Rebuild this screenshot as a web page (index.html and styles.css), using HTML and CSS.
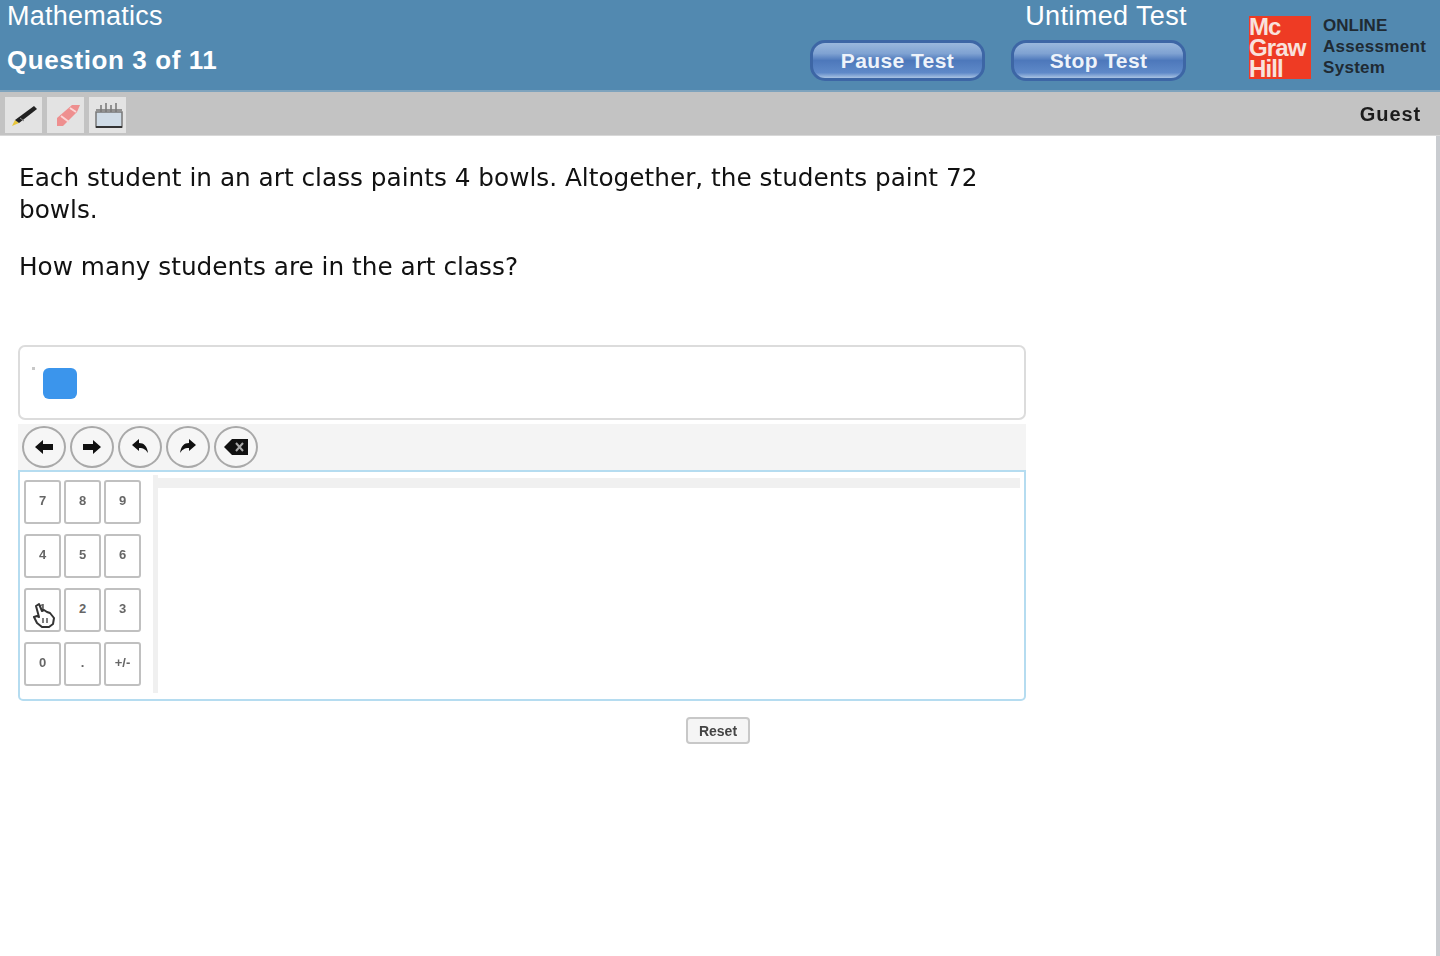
FILE: index.html
```html
<!DOCTYPE html>
<html lang="en">
<head>
<meta charset="utf-8">
<title>Online Assessment</title>
<link rel="stylesheet" href="styles.css">
</head>
<body>
<div class="page">
  <header class="header">
    <div class="titles">
      <div class="subject">Mathematics</div>
      <div class="progress">Question 3 of 11</div>
    </div>
    <div class="controls">
      <div class="timer">Untimed Test</div>
      <div class="buttons">
        <button class="pill">Pause Test</button>
        <button class="pill">Stop Test</button>
      </div>
    </div>
    <div class="brand">
      <div class="logo"><span>Mc</span><span>Graw</span><span>Hill</span></div>
      <div class="brand-text"><span class="online">ONLINE</span><span>Assessment</span><span>System</span></div>
    </div>
  </header>
  <div class="toolbar">
    <div class="tools">
      <div class="tool"><svg width="36" height="36" viewBox="0 0 36 36"><path d="M6 29l3-6 4 3z" fill="#e8c63a"/><path d="M9 23L28 9l3 3-18 14z" fill="#222"/><path d="M14 21l4 3" stroke="#888" stroke-width="1"/></svg></div>
      <div class="tool"><svg width="36" height="36" viewBox="0 0 36 36"><path d="M9 21L24 8h8l-3 7-14 14H9z" fill="#ee8f8f"/><path d="M13 19l8 6M22 11l6 4" stroke="#fbd5d5" stroke-width="2"/></svg></div>
      <div class="tool"><svg width="36" height="36" viewBox="0 0 36 36"><rect x="6" y="15" width="26" height="15" fill="#cfdbe6" stroke="#777" stroke-width="1.5"/><path d="M6 13h26M11 8v7M16 6v9M21 8v7M26 6v9" stroke="#777" stroke-width="1.5"/><path d="M6 30h26" stroke="#333" stroke-width="2"/></svg></div>
    </div>
    <div class="guest">Guest</div>
  </div>
  <main class="content">
    <p class="stem">Each student in an art class paints 4 bowls. Altogether, the students paint 72<br>bowls.</p>
    <p class="ask">How many students are in the art class?</p>
    <div class="answer"><span class="slot"></span></div>
    <div class="editbar">
      <div class="round"><svg width="22" height="22" viewBox="0 0 22 22"><path d="M2 11l8-7v4h10v6H10v4z" fill="#111"/></svg></div>
      <div class="round"><svg width="22" height="22" viewBox="0 0 22 22"><path d="M20 11l-8-7v4H2v6h10v4z" fill="#111"/></svg></div>
      <div class="round"><svg width="22" height="22" viewBox="0 0 22 22"><path d="M3 9l7-6v4c5 0 8 3 9 10-2-3-4-5-9-5v3z" fill="#111"/></svg></div>
      <div class="round"><svg width="22" height="22" viewBox="0 0 22 22"><path d="M19 9l-7-6v4C7 7 4 10 3 17c2-3 4-5 9-5v3z" fill="#111"/></svg></div>
      <div class="round"><svg width="26" height="22" viewBox="0 0 26 22"><path d="M1 11l8-8h16v16H9z" fill="#111"/><path d="M13 7l7 8M20 7l-7 8" stroke="#aaa" stroke-width="2"/></svg></div>
    </div>
    <div class="workspace">
      <div class="keypad">
        <button class="key">7</button><button class="key">8</button><button class="key">9</button>
        <button class="key">4</button><button class="key">5</button><button class="key">6</button>
        <button class="key">1<svg class="hand" width="26" height="28" viewBox="0 0 26 28"><path d="M8 3l3 7 2-1 3 2 3 1 4 5-1 6-4 3h-7l-5-4-3-6 3-1 2 1-3-11z" fill="#fff" stroke="#333" stroke-width="2" stroke-linejoin="round"/><path d="M12 17v5M16 17v5" stroke="#555" stroke-width="1.5"/></svg></button><button class="key">2</button><button class="key">3</button>
        <button class="key">0</button><button class="key">.</button><button class="key">+/-</button>
      </div>
      <div class="canvas"><div class="canvas-head"></div></div>
    </div>
    <div class="reset-row"><button class="reset">Reset</button></div>
  </main>
</div>
</body>
</html>
```
FILE: styles.css
```css
* { box-sizing: border-box; }
html, body { margin: 0; height: 100%; background: #fff; }
body { font-family: "Liberation Sans", Arial, sans-serif; color: #1d1d1d; overflow: hidden; }
button { font-family: inherit; padding: 0; cursor: pointer; }
.page { width: 1440px; height: 956px; display: flex; flex-direction: column; border-right: 4px solid #c9ccd0; filter: blur(0.7px); }

.header { height: 92px; width: 1440px; background: #5289b0; border-bottom: 2px solid #7ea3bd; display: flex; flex: none; color: #fff; }
.titles { width: 787px; padding: 0 0 0 7px; }
.subject { font-size: 27px; line-height: 32px; letter-spacing: .25px; }
.progress { font-size: 26px; line-height: 32px; font-weight: 700; margin-top: 12px; letter-spacing: .6px; }
.controls { width: 399px; display: flex; flex-direction: column; align-items: flex-end; }
.timer { font-size: 27px; line-height: 32px; letter-spacing: .4px; margin-right: -1px; }
.buttons { display: flex; gap: 26px; margin-top: 8px; }
.pill { width: 175px; height: 41px; border-radius: 15px; border: 3px solid #3d66a5; color: #eef3fa; font-size: 21px; font-weight: 700; letter-spacing: .4px; background: linear-gradient(#9ab8dd 0, #7fa2d2 30%, #4d78bb 50%, #5f89c8 85%, #a9c3e3 100%); }
.brand { display: flex; padding: 16px 0 0 63px; gap: 12px; }
.logo { width: 62px; height: 63px; background: #ee3b24; color: #f9e2dc; font-size: 24px; line-height: 21px; font-weight: 700; display: flex; flex-direction: column; letter-spacing: -.9px; }
.brand-text { display: flex; flex-direction: column; color: #1f2a33; font-size: 17px; line-height: 21px; font-weight: 700; margin-top: -1px; width: 110px; letter-spacing: .3px; }
.online { letter-spacing: 0; }

.toolbar { height: 44px; width: 1440px; flex: none; background: #c3c3c3; border-bottom: 1px solid #d8d8d8; display: flex; align-items: center; justify-content: space-between; padding: 2px 19px 0 5px; }
.tools { display: flex; gap: 5px; }
.tool { width: 37px; height: 36px; background: #e3e3e3; display: flex; align-items: center; justify-content: center; }
.guest { font-size: 20px; font-weight: 700; color: #1c1c1c; letter-spacing: .9px; }

.content { padding: 0 0 0 18px; width: 1026px; }
.stem, .ask { font-family: "DejaVu Sans", Verdana, sans-serif; font-size: 24.75px; line-height: 32px; color: #111; }
.stem { margin: 26px 0 0 1px; white-space: nowrap; }
.ask { margin: 25px 0 0 1px; }
.answer { position: relative; height: 75px; width: 1008px; margin-top: 62px; border: 2px solid #dcdcdc; border-radius: 7px; padding: 21px 0 0 23px; }
.answer::before { content: ""; position: absolute; left: 12px; top: 20px; width: 3px; height: 3px; background: #c8c8c8; }
.slot { display: block; width: 34px; height: 31px; background: #3b95ec; border-radius: 6px; }
.editbar { height: 46px; width: 1008px; margin-top: 4px; background: #f4f4f4; display: flex; align-items: center; gap: 4px; padding-left: 4px; }
.round { width: 44px; height: 42px; border: 2px solid #a9a9a9; border-radius: 50%; background: #f6f6f6; display: flex; align-items: center; justify-content: center; }
.workspace { height: 231px; width: 1008px; border: 2px solid #b5dcf0; border-radius: 0 0 5px 5px; display: flex; padding: 8px 4px 6px 4px; }
.keypad { display: grid; grid-template-columns: repeat(3, 37px); grid-template-rows: repeat(4, 44px); gap: 10px 3px; }
.key { position: relative; background: #fff; border: 2px solid #c0c0c0; border-radius: 3px; font-size: 13px; font-weight: 700; color: #666; padding-bottom: 3px; }
.hand { position: absolute; left: 5px; top: 11px; }
.canvas { flex: 1; margin: -5px 0 0 12px; border-left: 5px solid #f0f0f0; padding-top: 3px; }
.canvas-head { height: 10px; background: #f0f0f0; }
.reset-row { width: 1008px; display: flex; justify-content: center; padding: 16px 0 0 392px; }
.reset { width: 64px; height: 27px; background: #f5f5f5; border: 2px solid #c8c8c8; border-radius: 4px; font-size: 14px; font-weight: 700; color: #444; }
```
